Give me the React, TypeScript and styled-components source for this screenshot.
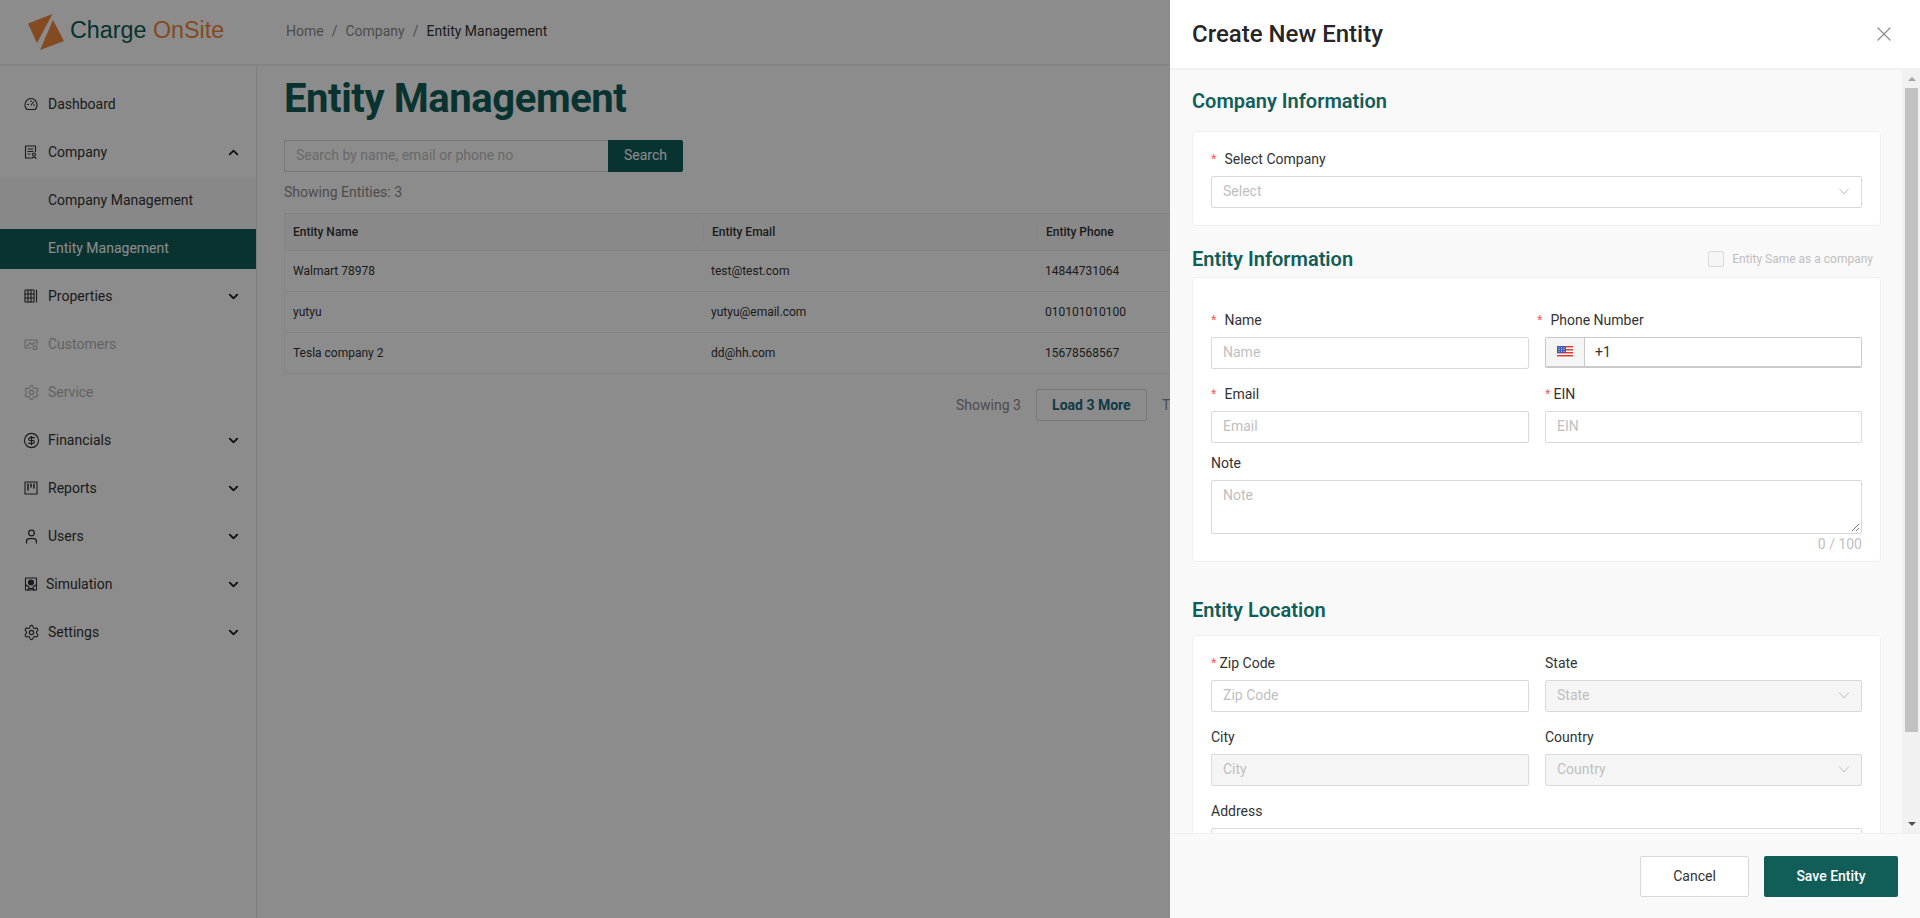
import React from 'react';
import styled, { createGlobalStyle } from 'styled-components';
import { ChevronDown, ChevronUp, CircleDollarSign, Settings, User, X } from 'lucide-react';

const Global = createGlobalStyle`
  html, body { margin: 0; padding: 0; height: 100%; overflow: hidden; background: #fff; }
  * { box-sizing: border-box; }
  body { font-family: Roboto, "Liberation Sans", sans-serif; font-size: 14px; color: #333; }
`;

const Page = styled.div`height: 918px; display: flex; flex-direction: column; overflow: hidden;`;
const Header = styled.header`height: 66px; flex: none; display: flex; align-items: center; border-bottom: 2px solid #f0f0f0; background: #fff;`;
const LogoWrap = styled.div`width: 286px; flex: none; padding-left: 27px; display: flex; align-items: center; gap: 5px;`;
const LogoText = styled.div`font-family: "Liberation Sans", Arial, sans-serif; font-size: 23.3px; color: #0d5c54; white-space: nowrap; padding-bottom: 3px; span { color: #f0883e; }`;
const Crumbs = styled.nav`display: flex; gap: 8px; color: #8c8c8c; font-size: 14px; padding-bottom: 2px; b { font-weight: 400; color: #333; }`;
const Body = styled.div`flex: 1; display: flex; min-height: 0;`;
const Side = styled.aside`width: 257px; flex: none; border-right: 1px solid #e8e8e8; padding-top: 18px;`;
const Item = styled.div<{ $off?: boolean; $tight?: boolean }>`
  height: 40px; margin-bottom: 8px; display: flex; align-items: center; padding-left: 24px; padding-right: 16px; font-size: 14px;
  gap: ${p => (p.$tight ? '8px' : '10px')};
  color: ${p => (p.$off ? '#b5b5b5' : '#333')};
  svg.lead { width: 14px; height: 14px; flex: none; color: ${p => (p.$off ? '#b5b5b5' : '#333')}; }
  svg.big { width: 17px; height: 17px; margin: 0 -1.5px; }
  svg.chev { margin-left: auto; color: #222; margin-right: -1px; }
`;
const SubGroup = styled.div`background: #f8f8f8; margin: -3px 0 7px; padding-top: 3px;`;
const SubItem = styled.div<{ $active?: boolean }>`
  height: 40px; display: flex; align-items: center; padding-left: 48px; font-size: 14px;
  margin-bottom: ${p => (p.$active ? '0' : '9px')};
  padding-bottom: ${p => (p.$active ? '2px' : '0')};
  background: ${p => (p.$active ? '#115e59' : 'transparent')};
  color: ${p => (p.$active ? '#fff' : '#333')};
`;
const Main = styled.main`flex: 1; padding: 0 0 0 27px; min-width: 0;`;
const Title = styled.h1`margin: 9px 0 0; font-size: 40px; line-height: 47px; font-weight: 700; color: #115e59; letter-spacing: -0.42px;`;
const SearchRow = styled.div`display: flex; margin-top: 18px;`;
const SearchInput = styled.div`width: 324px; height: 32px; border: 1px solid #d9d9d9; border-right: 0; border-radius: 2px 0 0 2px; padding: 0 11px 2px; display: flex; align-items: center; color: #bfbfbf; font-size: 14px;`;
const SearchBtn = styled.div`width: 75px; height: 32px; padding-bottom: 2px; background: #115e59; color: #fff; display: flex; align-items: center; justify-content: center; border-radius: 0 2px 2px 0; font-size: 14px;`;
const Count = styled.div`margin-top: 11px; color: #8c8c8c; font-size: 14px; line-height: 18px;`;
const Table = styled.div`margin-top: 12px; width: 1200px; border: 1px solid #f0f0f0; border-bottom: 0;`;
const Row = styled.div<{ $head?: boolean }>`
  display: grid; grid-template-columns: 418px 334px 1fr; align-items: center;
  height: ${p => (p.$head ? '37px' : '41px')};
  border-bottom: 1px solid #f0f0f0;
  background: ${p => (p.$head ? '#fafafa' : '#fff')};
  font-weight: ${p => (p.$head ? 500 : 400)};
  font-size: 12px; color: #333;
`;
const Cell = styled.div<{ $sep?: boolean }>`padding-left: 8px; ${p => p.$sep ? 'border-left: 1px solid #f0f0f0; height: 20px; line-height: 20px;' : ''}`;
const Pager = styled.div`margin: 15px 0 0 672px; display: flex; align-items: center; gap: 15px; white-space: nowrap; color: #8c8c8c; font-size: 14px; height: 32px;`;
const LoadBtn = styled.div`width: 111px; height: 32px; border: 1px solid #d9d9d9; display: flex; align-items: center; justify-content: center; font-weight: 700; color: #1c6a80; font-size: 14px; border-radius: 2px;`;
const Overlay = styled.div`position: fixed; inset: 0; background: rgba(0,0,0,.45);`;
const Drawer = styled.aside`position: fixed; top: 0; right: 0; bottom: 0; width: 750px; background: #f9f9f9; display: flex; flex-direction: column;`;
const DrawerHead = styled.div`height: 70px; flex: none; background: #fff; border-bottom: 2px solid #f0f0f0; display: flex; align-items: center; justify-content: space-between; padding: 0 24px 0 22px;`;
const DrawerTitle = styled.div`font-size: 24px; font-weight: 500; color: #262626; margin-bottom: 1px;`;
const Close = styled.div`color: #8c8c8c; display: flex;`;
const Middle = styled.div`flex: 1; min-height: 0; display: flex; overflow: hidden;`;
const Scroll = styled.div`flex: 1; overflow: hidden; padding: 20px 21px 0 22px;`;
const Track = styled.div`width: 18px; flex: none; background: #f1f1f1; display: flex; flex-direction: column; align-items: stretch; padding: 0 2px 0 3px;`;
const ArrowBox = styled.div<{ $h: number }>`height: ${p => p.$h}px; display: flex; align-items: center; justify-content: center; flex: none;`;
const Tri = styled.div<{ $up?: boolean; $dim?: boolean }>`
  width: 0; height: 0; border-left: 4px solid transparent; border-right: 4px solid transparent;
  ${p => p.$up ? `border-bottom: 4px solid ${p.$dim ? '#a3a3a3' : '#505050'};` : `border-top: 4px solid ${p.$dim ? '#a3a3a3' : '#505050'};`}
`;
const Thumb = styled.div`height: 644px; background: #c1c1c1; flex: none;`;
const Spacer = styled.div`flex: 1;`;
const SectionHead = styled.div`display: flex; justify-content: space-between; align-items: center; height: 22px;`;
const SectionTitle = styled.h3`margin: 0; font-size: 20px; font-weight: 600; color: #115e59; line-height: 22px;`;
const SameAs = styled.label`display: flex; align-items: center; gap: 8px; color: #bfbfbf; font-size: 12px; padding-right: 8px;`;
const CheckBox = styled.span`width: 16px; height: 16px; border: 1px solid #d9d9d9; background: #f5f5f5; border-radius: 2px; display: block;`;
const Card = styled.div<{ $mt: number; $mb?: number; $pt?: number; $pb?: number }>`
  background: #fff; border: 1px solid #f0f0f0; border-radius: 4px;
  margin-top: ${p => p.$mt}px; margin-bottom: ${p => p.$mb ?? 0}px;
  padding: ${p => p.$pt ?? 18}px 18px ${p => p.$pb ?? 17}px 18px;
`;
const Grid = styled.div`display: grid; grid-template-columns: 318px 317px; column-gap: 16px;`;
const Field = styled.div<{ $span?: boolean; $mb?: number }>`grid-column: ${p => p.$span ? '1 / -1' : 'auto'}; margin-bottom: ${p => p.$mb ?? 0}px; min-width: 0;`;
const Label = styled.div<{ $gap?: number; $shift?: number }>`
  height: 18px; line-height: 18px; margin-bottom: 8px; margin-left: ${p => p.$shift ?? 0}px; font-size: 14px; color: #333; display: flex;
  i { font-style: normal; color: #ff4d4f; margin-right: ${p => p.$gap ?? 8}px; font-size: 14px; font-family: "Liberation Sans", sans-serif; }
`;
const Box = styled.div<{ $off?: boolean }>`
  height: 32px; border: 1px solid #d9d9d9; border-radius: 2px; padding: 0 11px 2px;
  display: flex; align-items: center; justify-content: space-between; font-size: 14px; color: #bfbfbf;
  background: ${p => p.$off ? '#f5f5f5' : '#fff'};
`;
const Chevron = styled.svg`width: 12px; height: 12px; color: #bfbfbf; flex: none;`;
const Phone = styled.div`display: flex; border: 1px solid #cacaca; border-bottom-width: 2px; border-radius: 2px; margin-top: 1px; height: 31px; background: #fff;`;
const FlagBox = styled.div`width: 39px; background: #f5f5f5; border-right: 1px solid #cacaca; display: flex; align-items: center; justify-content: center; flex: none;`;
const PhoneVal = styled.div`padding-left: 10px; display: flex; align-items: center; color: #333; font-size: 14px;`;
const Area = styled.div`height: 54px; border: 1px solid #d9d9d9; border-radius: 2px; padding: 4px 11px; color: #bfbfbf; font-size: 14px; line-height: 20px; display: flex; flex-direction: column; justify-content: space-between;`;
const Grip = styled.svg`width: 9px; height: 9px; align-self: flex-end; margin: 0 -10px -3px 0; color: #555;`;
const Counter = styled.div`text-align: right; color: #bfbfbf; font-size: 14px; line-height: 18px; margin-top: 1px;`;
const Footer = styled.div`height: 85px; flex: none; background: #f9f9f9; border-top: 1px solid #f0f0f0; display: flex; justify-content: flex-end; gap: 15px; padding: 22px 22px 0 0;`;
const CancelBtn = styled.div`width: 109px; height: 41px; padding-bottom: 2px; background: #fff; border: 1px solid #d9d9d9; border-radius: 2px; display: flex; align-items: center; justify-content: center; color: #333; font-size: 14px;`;
const SaveBtn = styled.div`width: 134px; height: 41px; padding-bottom: 2px; background: #115e59; border-radius: 2px; display: flex; align-items: center; justify-content: center; color: #fff; font-size: 14px; font-weight: 500;`;

const Lead = (p: { children: React.ReactNode }) => (
  <svg className="lead" viewBox="0 0 14 14" fill="none" stroke="currentColor" strokeWidth="1.1" strokeLinecap="round" strokeLinejoin="round">{p.children}</svg>
);
const LogoMark = () => (
  <svg width="38" height="38" viewBox="0 0 38 38">
    <path d="M1 10.5 L25.5 1 L10 30 Z" fill="#f0883e" />
    <path d="M26 7 L37 28 L13 37 Z" fill="#f0883e" />
  </svg>
);
const Caret = () => (
  <Chevron viewBox="0 0 12 12" fill="none" stroke="currentColor" strokeWidth="1"><path d="M1.2 3.6 L6 9 L10.8 3.6" /></Chevron>
);
const Flag = () => (
  <svg width="16" height="12" viewBox="0 0 16 12">
    <rect x="0" y="0" width="16" height="12" fill="#fff" />
    {[0, 3, 6, 9].map(y => <rect key={y} x="0" y={y} width="16" height="1.5" fill="#e8382d" />)}
    <rect x="0" y="0" width="9" height="7" fill="#3c5bb0" />
    {[2, 4.5, 7].map(x => [1.7, 3.5, 5.3].map(y => <circle key={`${x}-${y}`} cx={x} cy={y} r="0.5" fill="#fff" />))}
  </svg>
);
const Req = () => <i>*</i>;

export default function App() {
  const down = <ChevronDown className="chev" size={15} strokeWidth={3} />;
  return (
    <Page>
      <Global />
      <Header>
        <LogoWrap><LogoMark /><LogoText>Charge <span>OnSite</span></LogoText></LogoWrap>
        <Crumbs><span>Home</span><span>/</span><span>Company</span><span>/</span><b>Entity Management</b></Crumbs>
      </Header>
      <Body>
        <Side>
          <Item><Lead><path d="M3 12.5h8c4-3.5 1.5-11-4-11s-8 7.5-4 11z" /><path d="M7 8l2.5-3M3.5 7.5h1M9.5 8h1M7 3.5v1" /></Lead>Dashboard</Item>
          <Item><Lead><path d="M11.5 6.5V1h-10v12h5" /><path d="M4 4h5M4 6.5h5M4 9h2" /><circle cx="10" cy="9.5" r="1.5" /><path d="M7.8 13.5c.3-1.8 4.1-1.8 4.4 0" /></Lead>Company<ChevronUp className="chev" size={15} strokeWidth={3} /></Item>
          <SubGroup>
            <SubItem>Company Management</SubItem>
            <SubItem $active>Entity Management</SubItem>
          </SubGroup>
          <Item><Lead><rect x="1" y="1" width="9" height="12" /><path d="M4 1v12M7 1v12M1 5h9M1 9h9M12.5 1v12" /></Lead>Properties{down}</Item>
          <Item $off><Lead><path d="M7 11H1V3h12v4" /><path d="M3 9l3-3 2 1.5L11 5" /><circle cx="11" cy="10.5" r="2" /></Lead>Customers</Item>
          <Item $off><Settings className="lead big" strokeWidth={1.5} />Service</Item>
          <Item><CircleDollarSign className="lead big" strokeWidth={1.6} />Financials{down}</Item>
          <Item><Lead><rect x="1" y="1" width="12" height="12" /><path d="M4 3v6M7 3v3M10 3v4" strokeWidth="1.5" /></Lead>Reports{down}</Item>
          <Item><User className="lead big" strokeWidth={1.8} />Users{down}</Item>
          <Item $tight><Lead><rect x="1.5" y="1" width="11" height="12" /><circle cx="7" cy="5.5" r="2.5" fill="currentColor" /><path d="M2 8l3 2M12 8l-3 2M4 13c0-2 6-2 6 0" strokeWidth="1.5" /></Lead>Simulation{down}</Item>
          <Item><Settings className="lead big" strokeWidth={1.6} />Settings{down}</Item>
        </Side>
        <Main>
          <Title>Entity Management</Title>
          <SearchRow><SearchInput>Search by name, email or phone no</SearchInput><SearchBtn>Search</SearchBtn></SearchRow>
          <Count>Showing Entities: 3</Count>
          <Table>
            <Row $head><Cell>Entity Name</Cell><Cell $sep>Entity Email</Cell><Cell $sep>Entity Phone</Cell></Row>
            <Row><Cell>Walmart 78978</Cell><Cell>test@test.com</Cell><Cell>14844731064</Cell></Row>
            <Row><Cell>yutyu</Cell><Cell>yutyu@email.com</Cell><Cell>010101010100</Cell></Row>
            <Row><Cell>Tesla company 2</Cell><Cell>dd@hh.com</Cell><Cell>15678568567</Cell></Row>
          </Table>
          <Pager><span>Showing 3</span><LoadBtn>Load 3 More</LoadBtn><span>Total 3</span></Pager>
        </Main>
      </Body>
      <Overlay />
      <Drawer>
        <DrawerHead>
          <DrawerTitle>Create New Entity</DrawerTitle>
          <Close><X size={24} strokeWidth={1.2} /></Close>
        </DrawerHead>
        <Middle>
          <Scroll>
            <SectionHead><SectionTitle>Company Information</SectionTitle></SectionHead>
            <Card $mt={19} $mb={22}>
              <Field>
                <Label><Req />Select Company</Label>
                <Box>Select<Caret /></Box>
              </Field>
            </Card>
            <SectionHead>
              <SectionTitle>Entity Information</SectionTitle>
              <SameAs><CheckBox />Entity Same as a company</SameAs>
            </SectionHead>
            <Card $mt={7} $mb={37} $pt={33} $pb={8}>
              <Grid>
                <Field $mb={16}><Label><Req />Name</Label><Box>Name</Box></Field>
                <Field $mb={16}><Label $shift={-8}><Req />Phone Number</Label><Phone><FlagBox><Flag /></FlagBox><PhoneVal>+1</PhoneVal></Phone></Field>
                <Field $mb={11}><Label><Req />Email</Label><Box>Email</Box></Field>
                <Field $mb={11}><Label $gap={3}><Req />EIN</Label><Box>EIN</Box></Field>
                <Field $span>
                  <Label>Note</Label>
                  <Area>Note<Grip viewBox="0 0 9 9" fill="none" stroke="currentColor" strokeWidth="0.8"><path d="M1 8L8 1M5 8L8 5" /></Grip></Area>
                  <Counter>0 / 100</Counter>
                </Field>
              </Grid>
            </Card>
            <SectionHead><SectionTitle>Entity Location</SectionTitle></SectionHead>
            <Card $mt={14}>
              <Grid>
                <Field $mb={16}><Label $gap={3}><Req />Zip Code</Label><Box>Zip Code</Box></Field>
                <Field $mb={16}><Label>State</Label><Box $off>State<Caret /></Box></Field>
                <Field $mb={16}><Label>City</Label><Box $off>City</Box></Field>
                <Field $mb={16}><Label>Country</Label><Box $off>Country<Caret /></Box></Field>
                <Field $span><Label>Address</Label><Box /></Field>
              </Grid>
            </Card>
          </Scroll>
          <Track>
            <ArrowBox $h={18}><Tri $up $dim /></ArrowBox>
            <Thumb />
            <Spacer />
            <ArrowBox $h={18}><Tri /></ArrowBox>
          </Track>
        </Middle>
        <Footer><CancelBtn>Cancel</CancelBtn><SaveBtn>Save Entity</SaveBtn></Footer>
      </Drawer>
    </Page>
  );
}
